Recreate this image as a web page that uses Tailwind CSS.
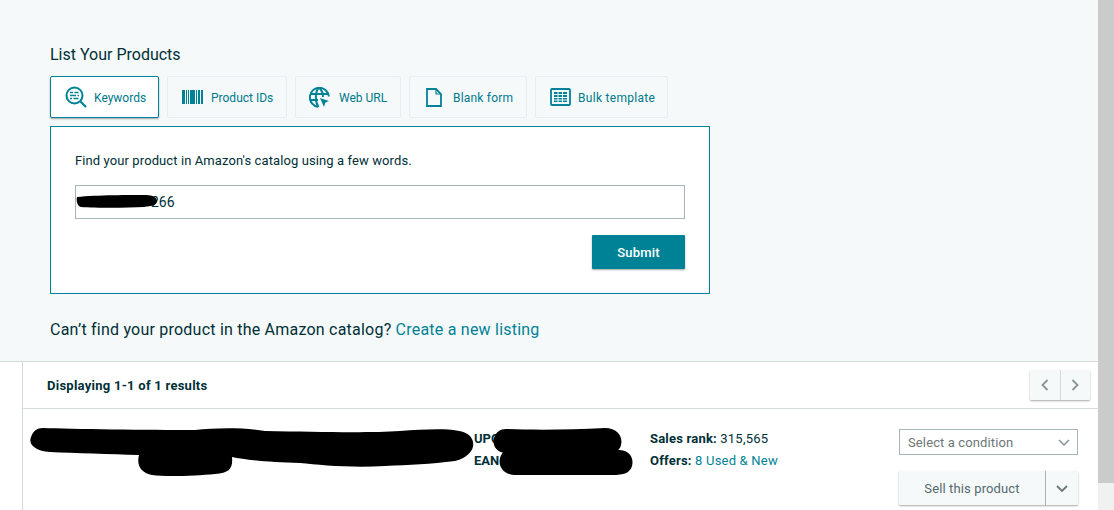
<!DOCTYPE html>
<html lang="en">
<head>
    <meta charset="UTF-8">
    <title>List Your Products</title>
    <script src="https://cdn.jsdelivr.net/npm/@tailwindcss/browser@4"></script>
</head>
<body class="h-[510px] w-[1114px] overflow-hidden flex bg-white font-['Roboto',sans-serif] text-[#002f36]">
    <!-- Page -->
    <div class="relative w-[1098px] h-[510px] overflow-hidden">
        <!-- Search section -->
        <section class="h-[362px] bg-[#f5f9fa] border-b border-[#d5dbdb] pl-[50px] pt-[45px]">
            <h2 class="text-[16px] leading-[20px] h-[31px] text-[#002f36]">List Your Products</h2>

            <!-- Tabs -->
            <div class="flex gap-2 h-[42px] text-[12px] text-[#00798c]">
                <button class="w-[109px] flex items-center gap-[7px] pl-[14px] bg-white border border-[#008296] rounded-[2px] shadow-[0_1px_2px_rgba(0,0,0,0.35)]">
                    <svg class="w-[22px] h-[22px]" viewBox="0 0 22 22" fill="none" stroke="#008296">
                        <circle cx="9.5" cy="9.5" r="8" stroke-width="2"/>
                        <path d="M15.5 15.5L21 21" stroke-width="2.2"/>
                        <path d="M5 6.5h3M9.500 6.500h4M5 9.500h6M12.500 9.500h1.500M5 12.500h2M8.500 12.500h5" stroke-width="1.600"/>
                    </svg>
                    <span class="pt-[2px]">Keywords</span>
                </button>
                <button class="w-[120px] flex items-center gap-[8px] pl-[14px] border border-[#e6eeef] rounded-[2px]">
                    <svg class="w-[21px] h-[14px]" viewBox="0 0 21 14" fill="#008296">
                        <rect x="0" width="3" height="14"/><rect x="4" width="1" height="14"/><rect x="6" width="1" height="14"/>
                        <rect x="8" width="5" height="14"/><rect x="14" width="1" height="14"/><rect x="16" width="2" height="14"/><rect x="19" width="2" height="14"/>
                    </svg>
                    <span class="pt-[2px]">Product IDs</span>
                </button>
                <button class="w-[106px] flex items-center gap-[9px] pl-[13px] border border-[#e6eeef] rounded-[2px]">
                    <svg class="w-[21px] h-[21px]" viewBox="0 0 21 21" fill="none" stroke="#008296" stroke-width="2">
                        <path d="M9 19.700A9.500 9.500 0 1 1 19.800 9.500"/>
                        <path d="M1 7h18M1 13h8M9.500 1C6 5 6 15 9.500 20M10.500 1C13 3.500 14 6.500 14 10"/>
                        <path d="M11 11l9 3-3.600 1.400L15 20z" fill="#008296" stroke="none"/>
                    </svg>
                    <span class="pt-[2px]">Web URL</span>
                </button>
                <button class="w-[118px] flex items-center gap-[11px] pl-[16px] border border-[#e6eeef] rounded-[2px] tracking-[0.2px]">
                    <svg class="w-[16px] h-[19px]" viewBox="0 0 16 19" fill="none" stroke="#008296" stroke-width="1.800">
                        <path d="M1 1h9l5 5v12H1z"/>
                        <path d="M10 1v5h5" stroke-width="1.200"/>
                    </svg>
                    <span class="pt-[2px]">Blank form</span>
                </button>
                <button class="w-[133px] flex items-center gap-[7px] pl-[14px] border border-[#e6eeef] rounded-[2px] tracking-[0.3px]">
                    <svg class="w-[21px] h-[18px]" viewBox="0 0 21 18" fill="none">
                        <rect x="1" y="1" width="19" height="16" rx="1" stroke="#008296" stroke-width="1.800"/>
                        <path d="M4 4h3.500v2H4zM8.500 4H12v2H8.500zM13 4h4v2h-4zM4 7h3.500v2H4zM8.500 7H12v2H8.500zM13 7h4v2h-4zM4 10h3.500v1.500H4zM8.500 10H12v1.500H8.500zM13 10h4v1.500h-4zM4 12.500h3.500V14H4zM8.500 12.500H12V14H8.500zM13 12.500h4V14h-4z" fill="#008296"/>
                    </svg>
                    <span class="pt-[2px]">Bulk template</span>
                </button>
            </div>

            <!-- Keyword panel -->
            <div class="mt-2 w-[660px] h-[168px] bg-white border border-[#008296] pl-[24px] pr-[24px] pt-[25px]">
                <p class="text-[13px] leading-[18px] tracking-[0.1px] text-[#002f36]">Find your product in Amazon's catalog using a few words.</p>
                <div class="relative mt-[15px] h-[34px] border border-[#a6b6b6] flex items-center justify-start pl-[75px] text-[14px] text-[#002f36]">
                    266
                    <svg class="absolute left-0 top-[8px]" width="84" height="14" viewBox="0 0 84 14">
                        <path d="M1 3C20 1 55 1 70 1C77 1 81 4 81 7C81 11 76 12 68 13C50 14 20 14 5 13C1 12 0 6 1 3Z" fill="#000"/>
                    </svg>
                </div>
                <div class="flex justify-end mt-[16px]">
                    <button class="w-[93px] h-[34px] pt-[2px] bg-[#008296] rounded-[1px] text-white text-[13px] font-medium tracking-[0.2px] shadow-[0_1px_2px_rgba(0,0,0,0.35)]">Submit</button>
                </div>
            </div>

            <p class="mt-[25px] text-[16px] leading-[22px] tracking-[0.22px] text-[#002f36]">Can’t find your product in the Amazon catalog? <a class="text-[#008296]">Create a new listing</a></p>
        </section>

        <!-- Results -->
        <section class="ml-[22px] h-[148px] border-l border-[#d5dbdb]">
            <div class="h-[47px] border-b border-[#d5dbdb] flex items-center justify-between pl-[24px] pr-[8px]">
                <span class="text-[13px] font-bold pt-[2px] tracking-[0.26px]">Displaying 1-1 of 1 results</span>
                <div class="flex w-[60px] h-[30px] mb-[1px] bg-[#f5f9fa] rounded-[1px] shadow-[0_1px_2px_rgba(0,0,0,0.35)]">
                    <button class="flex-1 flex items-center justify-center border-r border-[#d5dbdb]">
                        <svg width="8" height="12" viewBox="0 0 8 12" fill="none" stroke="#879596" stroke-width="1.800"><path d="M6.500 1L1.500 6l5 5"/></svg>
                    </button>
                    <button class="flex-1 flex items-center justify-center">
                        <svg width="8" height="12" viewBox="0 0 8 12" fill="none" stroke="#879596" stroke-width="1.800"><path d="M1.500 1l5 5-5 5"/></svg>
                    </button>
                </div>
            </div>
            <div class="flex pt-[19px] text-[13px] leading-[22px]">
                <div class="w-[451px]"></div>
                <div class="w-[176px] font-bold">
                    <div>UPC</div>
                    <div>EAN</div>
                </div>
                <div class="w-[249px] tracking-[0.2px]">
                    <div><b>Sales rank:</b> 315,565</div>
                    <div><b>Offers:</b> <a class="text-[#008296]">8 Used &amp; New</a></div>
                </div>
                <div class="w-[179px] mt-[1px] tracking-[0.12px]">
                    <div class="w-[179px] h-[26px] border border-[#a6b6b6] flex items-center justify-between pl-[8px] pr-[7px] pt-[2px] text-[#6c7778]">
                        Select a condition
                        <svg class="-mt-[2px]" width="12" height="7" viewBox="0 0 12 7" fill="none" stroke="#879596" stroke-width="1.500"><path d="M1 1l5 5 5-5"/></svg>
                    </div>
                    <div class="mt-[16px] flex w-[179px] h-[34px] bg-[#f5f9fa] rounded-[1px] shadow-[0_1px_2px_rgba(0,0,0,0.35)] text-[#55696e]">
                        <button class="w-[147px] pt-[2px] border-r border-[#a6b6b6]">Sell this product</button>
                        <button class="flex-1 flex items-center justify-center">
                            <svg width="12" height="7" viewBox="0 0 12 7" fill="none" stroke="#6c7778" stroke-width="1.800"><path d="M1 1l5 5 5-5"/></svg>
                        </button>
                    </div>
                </div>
            </div>
        </section>

        <!-- Redaction marks scribbled over the screenshot -->
        <svg class="absolute left-0 top-0" width="1098" height="510" viewBox="0 0 1098 510">
            <path fill="#000" d="M43 428C70 429 150 430 195 430C215 428 240 427 265 431C320 432 370 433 400 431C430 429 462 427 470 436C477 444 473 456 455 461C430 464 410 465 385 466C350 468 320 465 300 463C270 462 245 460 232 457C233 468 230 473 215 474C195 476 165 477 152 475C142 473 136 466 139 455C110 454 75 453 50 452C35 451 28 444 31 437C33 431 37 428 43 428Z"/>
            <path fill="#000" d="M506 429C530 430 570 430 605 428C618 428 623 437 621 445C620 451 614 453 606 454C575 456 530 455 505 453C496 452 492 445 494 438C496 432 500 429 506 429Z"/>
            <path fill="#000" d="M510 450C540 451 590 450 620 450C630 451 634 458 632 466C630 473 624 475 612 475C580 475 545 475 514 475C503 474 498 466 500 458C502 452 505 450 510 450Z"/>
        </svg>
    </div>

    <!-- Scrollbar -->
    <div class="w-4 h-[510px] bg-[#f1f1f1]">
        <div class="h-[483px] bg-[#cbcbcb]"></div>
    </div>
</body>
</html>
